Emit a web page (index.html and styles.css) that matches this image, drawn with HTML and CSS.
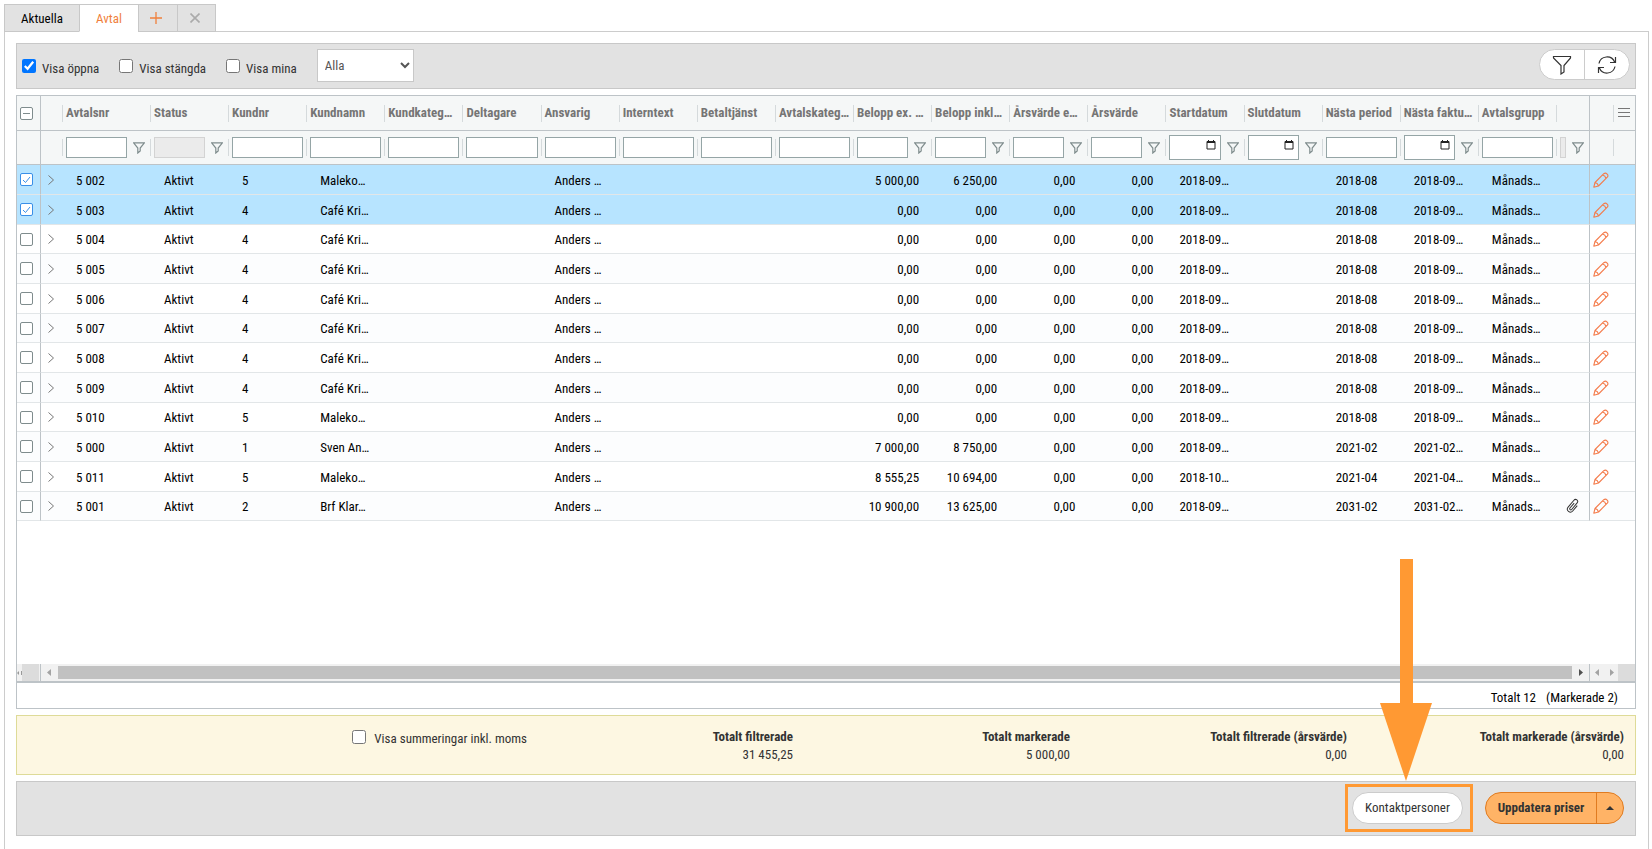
FILE: index.html
```html
<!DOCTYPE html>
<html lang="sv">
<head>
    <meta charset="UTF-8">
    <meta name="viewport" content="width=device-width, initial-scale=1.0">
    <title>Avtal</title>
    <link rel="stylesheet" href="styles.css">
</head>
<body>
    <svg class="sprite" aria-hidden="true">
        <symbol id="icon-filter" viewBox="0 0 12 12">
            <path d="M.6.8h10.8L7.2 6v3L4.8 11V6z" fill="none" stroke="currentColor" stroke-width="1.2"/>
        </symbol>
        <symbol id="icon-funnel" viewBox="0 0 20 20">
            <path d="M1.5 1.5h17V3L12 10.5V17l-3 2v-8.5L1.5 3z" fill="none" stroke="currentColor" stroke-width="1.2"/>
        </symbol>
        <symbol id="icon-refresh" viewBox="0 0 20 20">
            <path d="M2 8.5A8.2 8.2 0 0 1 17.6 7M18.5 2v5.5H13M18 11.5A8.2 8.2 0 0 1 2.4 13M1.5 18v-5.5H7" fill="none" stroke="currentColor" stroke-width="1.2"/>
        </symbol>
        <symbol id="icon-pencil" viewBox="0 0 16 16">
            <path d="M.8 15.200l1.200-4.700L10.800 1.700q1.800-1.400 3.200 0.300 1.700 1.400.3 3.200L5.500 14zM2 10.500q2.800.7 3.500 3.500M9.500 3q2.800.7 3.500 3.500" fill="none" stroke="currentColor" stroke-width="1.1" stroke-linejoin="round"/>
        </symbol>
        <symbol id="icon-clip" viewBox="0 0 16 16">
            <path d="M11 5v7a3 3 0 0 1-6 0V3a2 2 0 0 1 4.200 0v8.500a1 1 0 0 1-2.200 0V5" transform="rotate(40 8 8)" fill="none" stroke="currentColor"/>
        </symbol>
    </svg>

    <nav class="tabs">
        <button class="tab">Aktuella</button>
        <button class="tab tab-active">Avtal</button>
        <button class="tab tab-icon tab-add" aria-label="Ny flik">
            <svg width="12" height="12" viewBox="0 0 12 12"><path d="M6 0v12M0 6h12" stroke="currentColor" stroke-width="1.3"/></svg>
        </button>
        <button class="tab tab-icon tab-close" aria-label="Stäng flik">
            <svg width="10" height="10" viewBox="0 0 10 10"><path d="M.5.5l9 9M9.5.5l-9 9" stroke="currentColor" stroke-width="1.6"/></svg>
        </button>
    </nav>

    <main class="panel">
        <div class="toolbar">
            <label class="check"><input type="checkbox" checked><span>Visa öppna</span></label>
            <label class="check"><input type="checkbox"><span>Visa stängda</span></label>
            <label class="check"><input type="checkbox"><span>Visa mina</span></label>
            <select class="scope" aria-label="Urval">
                <option>Alla</option>
            </select>
            <div class="round-group">
                <button aria-label="Filter"><svg width="20" height="20"><use href="#icon-funnel"/></svg></button>
                <button aria-label="Uppdatera"><svg width="20" height="20"><use href="#icon-refresh"/></svg></button>
            </div>
        </div>

        <section class="grid">
            <table>
                <colgroup id="grid-cols"></colgroup>
                <thead>
                    <tr id="head-row"></tr>
                    <tr id="filter-row"></tr>
                </thead>
                <tbody id="grid-body"></tbody>
            </table>
            <div class="scrollbars">
                <div class="scroll-left">
                    <svg width="5" height="4" viewBox="0 0 5 4"><path d="M0 2l2-2v4zM4 0h1v4H4z" fill="#999"/></svg>
                </div>
                <div class="scroll-main">
                    <svg class="arrow-off" width="17" height="17" viewBox="0 0 17 17"><path d="M6 8.5L10 5v7z" fill="currentColor"/></svg>
                    <div class="thumb"></div>
                    <svg class="arrow-on" width="17" height="17" viewBox="0 0 17 17"><path d="M11 8.5L7 5v7z" fill="currentColor"/></svg>
                </div>
                <div class="scroll-right">
                    <svg class="arrow-off" width="14" height="17" viewBox="0 0 14 17"><path d="M5 8.5L9 5v7z" fill="currentColor"/></svg>
                    <svg class="arrow-off" width="14" height="17" viewBox="0 0 14 17"><path d="M10 8.5L6 5v7z" fill="currentColor"/></svg>
                </div>
            </div>
            <div class="grid-status"><span>Totalt 12</span><span>(Markerade 2)</span></div>
        </section>

        <section class="summary">
            <label class="check sum-check"><input type="checkbox"><span>Visa summeringar inkl. moms</span></label>
            <div class="sum"><b>Totalt filtrerade</b><span>31 455,25</span></div>
            <div class="sum"><b>Totalt markerade</b><span>5 000,00</span></div>
            <div class="sum"><b>Totalt filtrerade (årsvärde)</b><span>0,00</span></div>
            <div class="sum"><b>Totalt markerade (årsvärde)</b><span>0,00</span></div>
        </section>

        <footer class="actions">
            <div class="highlight">
                <svg class="pointer" width="52" height="222" viewBox="0 0 52 222"><path d="M20 0h13v144h19L26 222 0 144h20z" fill="#ff9933"/></svg>
                <button class="btn">Kontaktpersoner</button>
            </div>
            <div class="split">
                <button class="split-main">Uppdatera priser</button>
                <button class="split-more" aria-label="Fler val"><svg width="8" height="4" viewBox="0 0 8 4"><path d="M0 4l4-4 4 4z" fill="#333"/></svg></button>
            </div>
        </footer>
    </main>

    <script>
// filter: text, textf (text + funnel), off (disabled + funnel), date
const columns = [
    { name: 'Avtalsnr', filter: 'textf' },
    { name: 'Status', filter: 'off' },
    { name: 'Kundnr', filter: 'text' },
    { name: 'Kundnamn', filter: 'text' },
    { name: 'Kundkateg…', filter: 'text' },
    { name: 'Deltagare', filter: 'text' },
    { name: 'Ansvarig', filter: 'text' },
    { name: 'Interntext', filter: 'text' },
    { name: 'Betaltjänst', filter: 'text' },
    { name: 'Avtalskateg…', filter: 'text' },
    { name: 'Belopp ex. …', filter: 'textf', num: true },
    { name: 'Belopp inkl…', filter: 'textf', num: true },
    { name: 'Årsvärde e…', filter: 'textf', num: true },
    { name: 'Årsvärde', filter: 'textf', num: true },
    { name: 'Startdatum', filter: 'date' },
    { name: 'Slutdatum', filter: 'date' },
    { name: 'Nästa period', filter: 'text' },
    { name: 'Nästa faktu…', filter: 'date' },
    { name: 'Avtalsgrupp', filter: 'text' },
    { name: '', filter: 'off' }
];

// nr, kundnr, kundnamn, belopp ex., belopp inkl., start, period, faktura
const contracts = [
    ['5 002', '5', 'Maleko…', '5 000,00', '6 250,00', '2018-09…', '2018-08', '2018-09…'],
    ['5 003', '4', 'Café Kri…', '0,00', '0,00', '2018-09…', '2018-08', '2018-09…'],
    ['5 004', '4', 'Café Kri…', '0,00', '0,00', '2018-09…', '2018-08', '2018-09…'],
    ['5 005', '4', 'Café Kri…', '0,00', '0,00', '2018-09…', '2018-08', '2018-09…'],
    ['5 006', '4', 'Café Kri…', '0,00', '0,00', '2018-09…', '2018-08', '2018-09…'],
    ['5 007', '4', 'Café Kri…', '0,00', '0,00', '2018-09…', '2018-08', '2018-09…'],
    ['5 008', '4', 'Café Kri…', '0,00', '0,00', '2018-09…', '2018-08', '2018-09…'],
    ['5 009', '4', 'Café Kri…', '0,00', '0,00', '2018-09…', '2018-08', '2018-09…'],
    ['5 010', '5', 'Maleko…', '0,00', '0,00', '2018-09…', '2018-08', '2018-09…'],
    ['5 000', '1', 'Sven An…', '7 000,00', '8 750,00', '2018-09…', '2021-02', '2021-02…'],
    ['5 011', '5', 'Maleko…', '8 555,25', '10 694,00', '2018-10…', '2021-04', '2021-04…'],
    ['5 001', '2', 'Brf Klar…', '10 900,00', '13 625,00', '2018-09…', '2031-02', '2031-02…']
];

const funnel = '<svg class="funnel" width="12" height="12"><use href="#icon-filter"/></svg>';
const calendar = '<svg class="calendar" width="10" height="10" viewBox="0 0 10 10"><path d="M1 1.5h8V9H1z" fill="none" stroke="#222"/><path d="M1 1h8v2H1zM2 0h1v1H2zM7 0h1v1H7z" fill="#222"/></svg>';

function filterCell(col) {
    const label = 'Filter ' + col.name;
    if (col.filter === 'date') {
        return `<div class="filter"><span class="date-box"><input type="text" aria-label="${label}">${calendar}</span>${funnel}</div>`;
    }
    const off = col.filter === 'off' ? 'disabled' : '';
    const icon = col.filter === 'text' ? '' : funnel;
    return `<div class="filter"><input type="text" aria-label="${label}" ${off}>${icon}</div>`;
}

document.getElementById('grid-cols').innerHTML =
    '<col class="col-check"><col class="col-expand"><col class="col-nr">' +
    '<col>'.repeat(18) +
    '<col class="col-file"><col class="col-edit"><col class="col-menu">';

document.getElementById('head-row').innerHTML =
    '<th class="pin-left"><input type="checkbox" class="box box-mixed" aria-label="Markera alla"></th><th></th>' +
    columns.map(c => `<th class="split-line">${c.name}</th>`).join('') +
    '<th class="pin-right"></th><th class="split-line menu"><svg width="12" height="10" viewBox="0 0 12 10"><path d="M0 .5h12M0 4.5h12M0 8.5h12" stroke="#777"/></svg></th>';

document.getElementById('filter-row').innerHTML =
    '<td class="pin-left"></td><td></td>' +
    columns.map(c => `<td class="split-line">${filterCell(c)}</td>`).join('') +
    '<td class="pin-right"></td><td class="split-line"></td>';

document.getElementById('grid-body').innerHTML = contracts.map((c, i) => {
    const [nr, kundnr, kund, ex, inkl, start, period, faktura] = c;
    const selected = i < 2;
    const file = i === 11 ? '<svg class="clip" width="16" height="16"><use href="#icon-clip"/></svg>' : '';
    const cells = [nr, 'Aktivt', kundnr, kund, '', '', 'Anders …', '', '', '', ex, inkl, '0,00', '0,00', start, '', period, faktura, 'Månads…'];
    return `
        <tr class="${selected ? 'selected' : ''}">
            <td class="pin-left"><input type="checkbox" class="box" aria-label="Markera ${nr}" ${selected ? 'checked' : ''}></td>
            <td class="expand"><svg width="6" height="10" viewBox="0 0 6 10"><path d="M.5.5L5.5 5l-5 4.5" fill="none" stroke="#777"/></svg></td>
            ${cells.map((v, n) => `<td class="${columns[n].num ? 'value num' : 'value'}">${v}</td>`).join('')}
            <td class="file">${file}</td>
            <td class="pin-right edit"><svg width="16" height="16"><use href="#icon-pencil"/></svg></td>
            <td></td>
        </tr>`;
}).join('');
    </script>
</body>
</html>
```
FILE: styles.css
```css
*{
    box-sizing: border-box;
}
body{
    font-family: "Roboto Condensed", Roboto, sans-serif;
    font-size: 13px;
    line-height: 18px;
    color: #333;
    margin: 0;
    padding: 4px 3px 0 4px;
    height: 100vh;
    display: flex;
    flex-direction: column;
    background-color: white;
}
button, input, select{
    font: inherit;
    color: inherit;
    margin: 0;
}
button{
    cursor: pointer;
    padding: 0;
}
svg{
    display: block;
    flex: none;
}
.sprite{
    width: 0;
    height: 0;
    position: absolute;
}

/* tabs */
.tabs{
    display: flex;
    height: 28px;
    margin-bottom: -1px;
}
.tab{
    display: flex;
    align-items: center;
    justify-content: center;
    width: 76px;
    padding-top: 1px;
    border: 1px solid #c8c8c8;
    background-color: #e2e2e2;
    color: black;
    margin-right: -1px;
    z-index: 1;
}
.tab-active{
    width: 60px;
    background-color: white;
    border-bottom-color: white;
    color: #f0803c;
}
.tab-icon{
    width: 40px;
    padding: 0 4px 0 0;
}
.tab-add{
    color: #f0803c;
}
.tab-close{
    width: 39px;
    color: #aaa;
}

.panel{
    flex: 1;
    display: flex;
    flex-direction: column;
    gap: 6px;
    border: 1px solid #ccc;
    border-bottom: none;
    padding: 11px 12px 13px 11px;
    min-height: 0;
}

/* toolbar */
.toolbar{
    display: flex;
    align-items: flex-start;
    height: 46px;
    padding: 5px;
    background-color: #e2e2e2;
    border: 1px solid #c8c8c8;
}
.check{
    display: flex;
    align-items: flex-start;
    gap: 6px;
}
.check input{
    width: 14px;
    height: 14px;
}
.toolbar .check{
    margin-top: 10px;
    margin-right: 20px;
}
.toolbar .check span{
    padding-top: 1px;
}
.scope{
    width: 97px;
    height: 33px;
    padding: 0 3px;
    border: 1px solid #c8c8c8;
    border-radius: 0;
    background-color: white;
    color: #555;
}
.round-group{
    display: flex;
    margin-left: auto;
    border: 1px solid #ccc;
    border-radius: 16px;
    background-color: white;
    overflow: hidden;
}
.round-group button{
    display: flex;
    align-items: center;
    justify-content: center;
    width: 44px;
    height: 29px;
    border: none;
    background: none;
}
.round-group button + button{
    width: 45px;
    border-left: 1px solid #ccc;
}

/* contract grid */
.grid{
    flex: 1;
    display: flex;
    flex-direction: column;
    border: 1px solid #bdc3c7;
    min-height: 0;
}
table{
    width: 100%;
    table-layout: fixed;
    border-collapse: separate;
    border-spacing: 0;
    color: black;
}
.col-check, .col-edit{
    width: 24px;
}
.col-expand{
    width: 21px;
}
.col-menu{
    width: 22px;
}
.col-nr{
    width: 88px;
}
.col-file{
    width: 33px;
}
th, td{
    padding: 0;
    text-align: left;
    white-space: nowrap;
}
thead th, thead td{
    height: 35px;
    background-color: #f5f7f7;
    border-bottom: 1px solid #bdc3c7;
    color: #757575;
}
thead td{
    height: 34px;
}
thead .split-line{
    background-image: linear-gradient(#d5dadc, #d5dadc);
    background-size: 1px 17px;
    background-repeat: no-repeat;
    background-position: left center;
    padding-left: 4px;
}
.pin-left{
    border-right: 1px solid #bdc3c7;
}
.pin-right{
    border-left: 1px solid #bdc3c7;
}
.box{
    appearance: none;
    display: block;
    width: 13px;
    height: 13px;
    margin-left: 3px;
    border: 1px solid #7f8c8d;
    border-radius: 2px;
    background: white center no-repeat;
}
.box:checked{
    border-color: #3a8fe8;
    background-image: url("data:image/svg+xml,%3Csvg xmlns='http://www.w3.org/2000/svg' width='11' height='11'%3E%3Cpath d='M2 6l2.5 2.5L9 3' fill='none' stroke='%233a8fe8'/%3E%3C/svg%3E");
}
.box-mixed{
    background-image: linear-gradient(#7f8c8d, #7f8c8d);
    background-size: 7px 1px;
}
.menu svg{
    margin-left: 1px;
}
.filter{
    display: flex;
    align-items: center;
    justify-content: space-between;
    gap: 6px;
    padding-right: 3px;
}
.filter input{
    flex: 1;
    min-width: 0;
    height: 21px;
    border: 1px solid #95a5a6;
    background-color: white;
}
.filter input:disabled{
    border-color: #d3d3d3;
    background-color: #ebebeb;
}
.filter .funnel{
    margin-right: 2px;
    color: #7f8c8d;
}
.date-box{
    position: relative;
    display: flex;
    flex: 1;
    min-width: 0;
}
.date-box input{
    width: 100%;
    height: 25px;
}
.calendar{
    position: absolute;
    right: 5px;
    top: 5px;
}
tbody td{
    height: 30px;
    border-bottom: 1px solid #e2e6e8;
}
tbody tr:nth-child(3n) td{
    height: 29px;
}
tbody tr:nth-child(even){
    background-color: #fcfdfe;
}
tbody .selected, tbody .selected:nth-child(even){
    background-color: #b7e4ff;
}
tbody td.pin-left{
    border-right-color: #bdc3c7;
}
.expand svg{
    margin-left: 7px;
}
.value{
    padding: 2px 12px 0 14px;
}
.num{
    text-align: right;
}
.clip{
    margin-left: 9px;
    color: #333;
}
.edit svg{
    margin-left: 3px;
    color: #f47c4c;
}

.scrollbars{
    display: flex;
    height: 19px;
    margin-top: auto;
    border-bottom: 2px solid #bdc3c7;
    background-color: #f1f1f1;
}
.scroll-left{
    display: flex;
    align-items: center;
    width: 24px;
    border-right: 1px solid #bdc3c7;
    background: linear-gradient(#dcdcdc, #dcdcdc) 5px 0 / 17px 17px no-repeat;
}
.scroll-main{
    flex: 1;
    display: flex;
}
.thumb{
    flex: 1;
    height: 13px;
    margin: 2px 0;
    background-color: #c1c1c1;
}
.scroll-right{
    display: flex;
    width: 46px;
    border-left: 1px solid #bdc3c7;
    background: linear-gradient(#dcdcdc, #dcdcdc) right / 17px 17px no-repeat;
}
.arrow-off{
    color: #a3a3a3;
}
.arrow-on{
    color: #505050;
}
.grid-status{
    display: flex;
    align-items: center;
    justify-content: flex-end;
    gap: 10px;
    height: 25px;
    padding: 4px 17px 0 0;
    color: black;
}

/* summary */
.summary{
    display: grid;
    grid-template-columns: 499px 266px 1fr 1fr 1fr;
    align-items: start;
    height: 60px;
    padding: 12px 11px;
    background-color: #fdf7e2;
    border: 1px solid #dedb98;
}
.sum-check{
    justify-content: flex-end;
    gap: 8px;
    padding-top: 2px;
}
.sum{
    display: flex;
    flex-direction: column;
    align-items: flex-end;
}

/* bottom actions */
.actions{
    display: flex;
    align-items: center;
    justify-content: flex-end;
    gap: 12px;
    height: 55px;
    padding: 0 11px 2px 0;
    background-color: #e2e2e2;
    border: 1px solid #c8c8c8;
}
.highlight{
    position: relative;
    padding: 5px 7px 5px 4px;
    border: 3px solid #ff9933;
}
.pointer{
    position: absolute;
    left: 32px;
    bottom: 48px;
}
.btn{
    display: block;
    width: 111px;
    height: 32px;
    border: 1px solid #ccc;
    border-radius: 16px;
    background-color: white;
}
.split{
    display: flex;
    height: 32px;
    border: 1px solid #e07b20;
    border-radius: 16px;
    background-color: #ffb366;
    overflow: hidden;
}
.split button{
    border: none;
    background: none;
}
.split .split-main{
    width: 110px;
    font-weight: bold;
}
.split .split-more{
    display: flex;
    align-items: center;
    justify-content: center;
    width: 27px;
    border-left: 1px solid #e07b20;
}
```
